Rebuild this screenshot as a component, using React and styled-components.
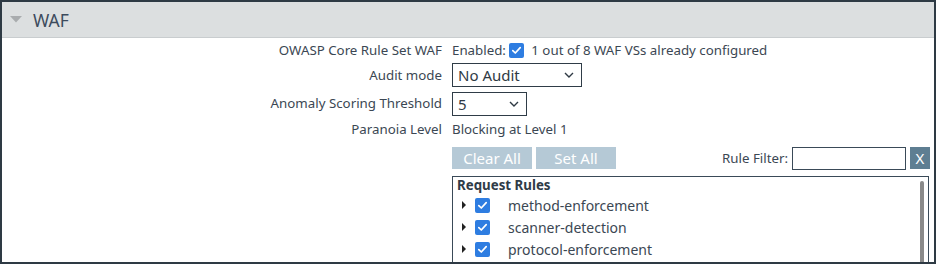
import React from "react";
import styled, { createGlobalStyle } from "styled-components";

const Global = createGlobalStyle`
  html, body { margin: 0; padding: 0; background: #fff; }
  body { font-family: "Noto Sans", "Open Sans", sans-serif; color: #3b4753; }
  * { box-sizing: border-box; }
`;

const Frame = styled.div`
  width: 936px;
  height: 264px;
  border: 2px solid #2e3a44;
  overflow: hidden;
  display: flex;
  flex-direction: column;
`;

const Header = styled.div`
  height: 36px;
  background: #dcdfe0;
  border-bottom: 1px solid #c9cdcf;
  display: flex;
  align-items: center;
  padding-left: 8px;
  gap: 11px;
  flex-shrink: 0;
`;

const Title = styled.div`
  font-size: 17.5px;
  color: #3c4b5d;
`;

const Body = styled.div`
  display: grid;
  grid-template-columns: 440px 1fr;
  column-gap: 10px;
  padding-top: 1px;
  font-size: 13.3px;
  align-items: center;
`;

const Label = styled.div`
  text-align: right;
  height: ${(p) => p.$h}px;
  line-height: ${(p) => p.$h}px;
  white-space: nowrap;
`;

const Value = styled.div`
  height: ${(p) => p.$h}px;
  display: flex;
  align-items: center;
  white-space: nowrap;
`;

const Check = styled.span`
  width: 15px;
  height: 15px;
  border-radius: 2px;
  background: #2e7de1;
  display: inline-flex;
  align-items: center;
  justify-content: center;
  flex-shrink: 0;
`;

const CheckBox = () => (
  <Check>
    <svg width="11" height="11" viewBox="0 0 11 11">
      <path d="M1.8 5.6 L4.3 8 L9.2 2.6" fill="none" stroke="#fff" strokeWidth="1.7" strokeLinecap="round" strokeLinejoin="round" />
    </svg>
  </Check>
);

const Select = styled.div`
  width: ${(p) => p.$w}px;
  height: 24px;
  border: 1px solid #2f3c47;
  background: #fff;
  display: flex;
  align-items: center;
  justify-content: space-between;
  padding: 0 7px 0 5px;
  font-size: 15px;
  color: #2f3a44;
`;

const Chevron = () => (
  <svg width="10" height="6" viewBox="0 0 10 6">
    <path d="M1 1 L5 5 L9 1" fill="none" stroke="#2f3a44" strokeWidth="1.4" />
  </svg>
);

const RulesPanel = styled.div`
  grid-column: 2;
  padding-top: 6px;
`;

const Toolbar = styled.div`
  display: flex;
  align-items: center;
  width: 478px;
  height: 24px;
`;

const LightButton = styled.div`
  width: 80px;
  height: 22px;
  background: #b5c9d6;
  color: #fff;
  font-size: 15px;
  display: flex;
  align-items: center;
  justify-content: center;
  margin-right: 4px;
`;

const Spacer = styled.div`
  flex: 1;
`;

const FilterLabel = styled.span`
  margin-right: 4px;
`;

const FilterInput = styled.div`
  width: 114px;
  height: 23px;
  border: 1px solid #3a4a58;
  background: #fff;
`;

const ClearButton = styled.div`
  width: 20px;
  height: 22px;
  background: #5e7e92;
  color: #fff;
  font-size: 15px;
  display: flex;
  align-items: center;
  justify-content: center;
  margin-left: 4px;
`;

const RulesBox = styled.div`
  margin-top: 6px;
  width: 477px;
  height: 100px;
  border: 1px solid #3a4a58;
  border-bottom: none;
  position: relative;
  padding: 0 0 0 4px;
`;

const Scrollbar = styled.div`
  position: absolute;
  right: 4px;
  top: 4px;
  bottom: 0;
  width: 4px;
  background: #8a8a8a;
  border-radius: 2px;
`;

const RulesTitle = styled.div`
  font-weight: bold;
  height: 17px;
  line-height: 17px;
  color: #2f3b47;
`;

const RuleRow = styled.div`
  height: 22px;
  display: flex;
  align-items: center;
  padding-left: 5px;
`;

const Caret = styled.span`
  width: 0;
  height: 0;
  border-top: 4px solid transparent;
  border-bottom: 4px solid transparent;
  border-left: 4px solid #222;
  margin-right: 9px;
`;

const RuleName = styled.span`
  margin-left: 18px;
  font-size: 14px;
`;

const rules = ["method-enforcement", "scanner-detection", "protocol-enforcement"];

export default function App() {
  return (
    <>
      <Global />
      <Frame>
        <Header>
          <svg width="12" height="7" viewBox="0 0 12 7">
            <path d="M0 0 L12 0 L6 6.5 Z" fill="#a9acae" />
          </svg>
          <Title>WAF</Title>
        </Header>
        <Body>
          <Label $h={22}>OWASP Core Rule Set WAF</Label>
          <Value $h={22}>
            Enabled:&nbsp;<CheckBox />&nbsp;&nbsp;1 out of 8 WAF VSs already configured
          </Value>
          <Label $h={28}>Audit mode</Label>
          <Value $h={28}>
            <Select $w={130}>No Audit<Chevron /></Select>
          </Value>
          <Label $h={29}>Anomaly Scoring Threshold</Label>
          <Value $h={29}>
            <Select $w={75}>5<Chevron /></Select>
          </Value>
          <Label $h={22}>Paranoia Level</Label>
          <Value $h={22}>Blocking at Level 1</Value>
          <RulesPanel>
            <Toolbar>
              <LightButton>Clear All</LightButton>
              <LightButton>Set All</LightButton>
              <Spacer />
              <FilterLabel>Rule Filter:</FilterLabel>
              <FilterInput />
              <ClearButton>X</ClearButton>
            </Toolbar>
            <RulesBox>
              <Scrollbar />
              <RulesTitle>Request Rules</RulesTitle>
              {rules.map((r) => (
                <RuleRow key={r}>
                  <Caret />
                  <CheckBox />
                  <RuleName>{r}</RuleName>
                </RuleRow>
              ))}
            </RulesBox>
          </RulesPanel>
        </Body>
      </Frame>
    </>
  );
}
